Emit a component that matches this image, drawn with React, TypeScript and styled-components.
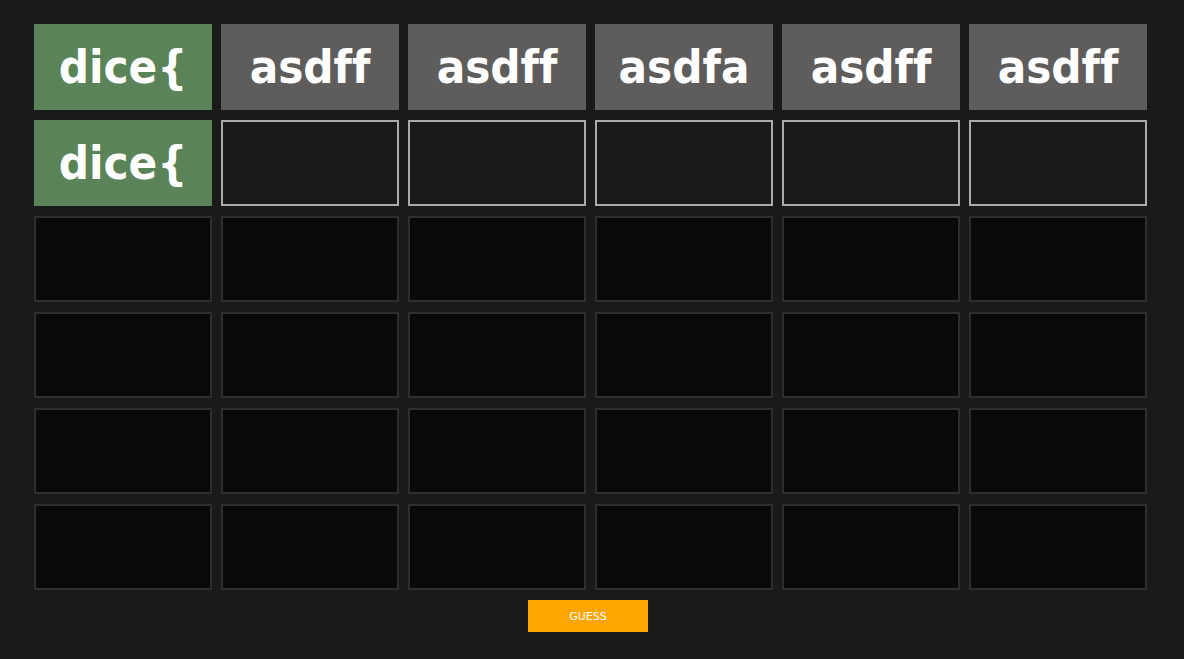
import React from "react";
import styled, { createGlobalStyle } from "styled-components";

const Global = createGlobalStyle`
  html, body { margin: 0; padding: 0; background: #1a1a1a; }
  body { font-family: "DejaVu Sans", Verdana, sans-serif; }
`;

const Page = styled.div`
  width: 1184px;
  height: 659px;
  background: #1a1a1a;
  box-sizing: border-box;
  padding: 24px 0 0 34px;
  display: flex;
  flex-direction: column;
`;

const Board = styled.div`
  display: grid;
  grid-template-columns: repeat(6, 178px);
  grid-auto-rows: 86px;
  column-gap: 9px;
  row-gap: 10px;
`;

type State = "correct" | "absent" | "active" | "empty";

const bg: Record<State, string> = {
  correct: "#5a8458",
  absent: "#5e5d5b",
  active: "#1a1a1a",
  empty: "#0a0a0a",
};
const border: Record<State, string> = {
  correct: "#5a8458",
  absent: "#5e5d5b",
  active: "#aaaaaa",
  empty: "#2e2e2e",
};

const Tile = styled.div<{ $state: State }>`
  box-sizing: border-box;
  background: ${(p) => bg[p.$state]};
  border: 2px solid ${(p) => border[p.$state]};
  display: flex;
  align-items: center;
  justify-content: center;
  color: #fff;
  font-family: "DejaVu Sans Condensed", "DejaVu Sans", sans-serif;
  font-stretch: condensed;
  font-weight: bold;
  font-size: 47px;
  font-variant-ligatures: none;
  font-feature-settings: "liga" 0, "clig" 0;
  line-height: 1;
  padding-bottom: 2px;
`;

const Footer = styled.div`
  width: 1113px;
  display: flex;
  justify-content: center;
  margin-top: 10px;
  padding-right: 5px;
  box-sizing: border-box;
`;

const GuessButton = styled.button`
  width: 120px;
  height: 32px;
  border: none;
  background: #ffa500;
  color: #fff;
  font-family: "DejaVu Sans", Verdana, sans-serif;
  font-size: 11px;
  padding: 0;
  cursor: pointer;
`;

const rows: { text: string; state: State }[][] = [
  [
    { text: "dice{", state: "correct" },
    { text: "asdff", state: "absent" },
    { text: "asdff", state: "absent" },
    { text: "asdfa", state: "absent" },
    { text: "asdff", state: "absent" },
    { text: "asdff", state: "absent" },
  ],
  [
    { text: "dice{", state: "correct" },
    ...Array.from({ length: 5 }, () => ({ text: "", state: "active" as State })),
  ],
  ...Array.from({ length: 4 }, () =>
    Array.from({ length: 6 }, () => ({ text: "", state: "empty" as State }))
  ),
];

export default function App() {
  return (
    <>
      <Global />
      <Page>
        <Board>
          {rows.flatMap((r, i) =>
            r.map((c, j) => (
              <Tile key={`${i}-${j}`} $state={c.state}>
                {c.text}
              </Tile>
            ))
          )}
        </Board>
        <Footer>
          <GuessButton>GUESS</GuessButton>
        </Footer>
      </Page>
    </>
  );
}
